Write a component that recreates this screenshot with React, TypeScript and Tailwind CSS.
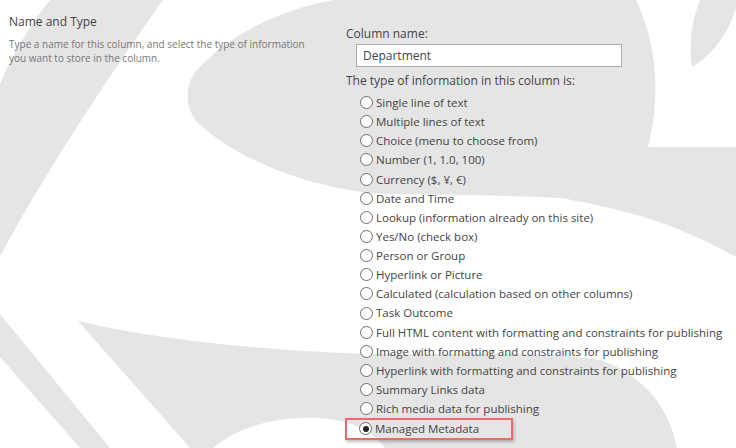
const options = [
  'Single line of text',
  'Multiple lines of text',
  'Choice (menu to choose from)',
  'Number (1, 1.0, 100)',
  'Currency ($, ¥, €)',
  'Date and Time',
  'Lookup (information already on this site)',
  'Yes/No (check box)',
  'Person or Group',
  'Hyperlink or Picture',
  'Calculated (calculation based on other columns)',
  'Task Outcome',
  'Full HTML content with formatting and constraints for publishing',
  'Image with formatting and constraints for publishing',
  'Hyperlink with formatting and constraints for publishing',
  'Summary Links data',
  'Rich media data for publishing',
  'Managed Metadata',
]

function Watermark() {
  return (
    <svg className="absolute inset-0 h-full w-full" viewBox="0 0 736 448" preserveAspectRatio="none">
      <g fill="#e5e5e5">
        {/* outer arc on the left */}
        <path d="M50 0 L163 0 C120 60 60 150 18 224 L0 256 L0 84 C12 55 30 25 50 0 Z" />
        {/* upper body of the S */}
        <path d="M333 0 L636 0 C655 40 662 90 648 147 L736 147 L736 257 C700 238 660 215 560 198 C480 194 420 195 368 193 C300 184 240 160 200 125 C182 108 185 80 200 67 C225 40 270 12 333 0 Z" />
        {/* top right tip */}
        <path d="M700 0 L736 0 L736 8 C728 35 712 55 692 67 C688 45 692 20 700 0 Z" />
        {/* thin diagonal stripe */}
        <path d="M0 314 L110 448 L80 448 L0 357 Z" />
        {/* lower body of the S */}
        <path d="M78 321 C150 338 250 350 368 354 C460 356 540 350 600 360 C645 375 670 410 677 448 L385 448 C370 425 335 416 300 418 C260 420 232 432 213 448 L190 448 Z" />
      </g>
    </svg>
  )
}

function Radio({ checked }: { checked?: boolean }) {
  return (
    <span className="flex h-[13px] w-[13px] shrink-0 items-center justify-center rounded-full border border-[#6d6d6d] bg-white">
      {checked && <span className="h-[6px] w-[6px] rounded-full bg-[#222]" />}
    </span>
  )
}

export default function App() {
  return (
    <div className="relative h-[448px] w-[736px] overflow-hidden bg-white font-['Open_Sans',sans-serif]">
      <Watermark />
      <div className="relative flex">
        {/* Left description */}
        <div className="w-[346px] shrink-0 pl-[9px] pt-[13px]">
          <h2 className="text-[12px] leading-[18px] text-[#444]">Name and Type</h2>
          <p className="mt-[6px] w-[312px] text-[10px] leading-[14px] text-[#777]">
            Type a name for this column, and select the type of information you want to store in the column.
          </p>
        </div>

        {/* Right form */}
        <div className="flex-1 pt-[25px]">
          <div className="text-[12px] leading-[18px] text-[#444]">Column name:</div>
          <div className="ml-[10px] mt-[1px] flex h-[23px] w-[266px] items-center border border-[#ababab] bg-white px-[6px] text-[12px] text-[#444]">
            Department
          </div>
          <div className="mt-[5px] text-[12px] leading-[18px] text-[#444]">The type of information in this column is:</div>
          <ul className="mt-[3px] flex flex-col">
            {options.map((label, i) => {
              const selected = i === options.length - 1
              return (
                <li key={label} className="flex h-[19.15px] items-center">
                  <div
                    className={`flex items-center gap-[3px] ${
                      selected
                        ? '-ml-[1px] mt-[2px] h-[22px] w-[168px] border-2 border-[#ec6a6a] pl-[12px] shadow-[1px_2px_3px_rgba(0,0,0,0.25)]'
                        : 'pl-[14px]'
                    }`}
                  >
                    <Radio checked={selected} />
                    <span className="whitespace-nowrap text-[11.5px] text-[#444]">{label}</span>
                  </div>
                </li>
              )
            })}
          </ul>
        </div>
      </div>
    </div>
  )
}
